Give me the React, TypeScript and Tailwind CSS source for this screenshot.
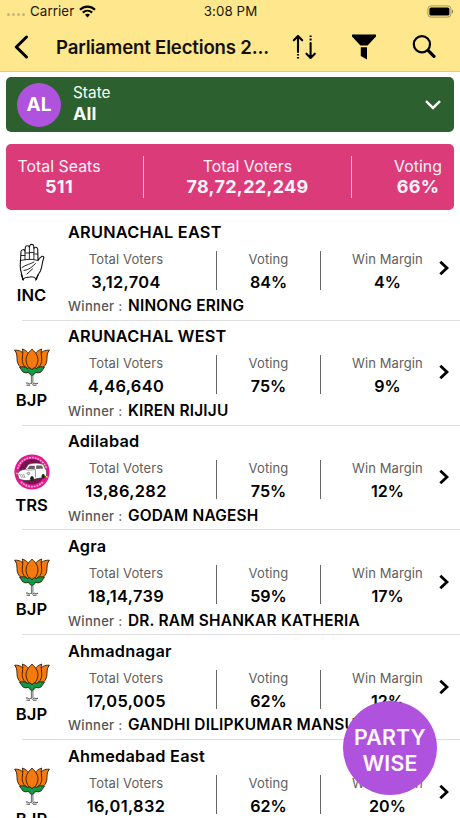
import type { ReactNode } from 'react';

/* ------------------------------------------------------------------ */
/*  Data                                                               */
/* ------------------------------------------------------------------ */

type Party = 'INC' | 'BJP' | 'TRS';

interface Constituency {
  name: string;
  party: Party;
  voters: string;
  voting: string;
  margin: string;
  winner: string;
}

const CONSTITUENCIES: Constituency[] = [
  { name: 'ARUNACHAL EAST', party: 'INC', voters: '3,12,704', voting: '84%', margin: '4%', winner: 'NINONG ERING' },
  { name: 'ARUNACHAL WEST', party: 'BJP', voters: '4,46,640', voting: '75%', margin: '9%', winner: 'KIREN RIJIJU' },
  { name: 'Adilabad', party: 'TRS', voters: '13,86,282', voting: '75%', margin: '12%', winner: 'GODAM NAGESH' },
  { name: 'Agra', party: 'BJP', voters: '18,14,739', voting: '59%', margin: '17%', winner: 'DR. RAM SHANKAR KATHERIA' },
  { name: 'Ahmadnagar', party: 'BJP', voters: '17,05,005', voting: '62%', margin: '12%', winner: 'GANDHI DILIPKUMAR MANSU' },
  { name: 'Ahmedabad East', party: 'BJP', voters: '16,01,832', voting: '62%', margin: '20%', winner: '' },
];

/* ------------------------------------------------------------------ */
/*  Party symbols                                                      */
/* ------------------------------------------------------------------ */

function HandSymbol() {
  return (
    <svg viewBox="0 0 36 40" className="h-10 w-9" fill="#fff" stroke="#111" strokeWidth="1.1" strokeLinejoin="round" strokeLinecap="round">
      <path d="M8.5 37.5 C9 34 6.2 30 6.2 24 L7 9.5 C7.3 7.2 10.5 7 11 9.3 L11.3 5.5 C11.7 3.3 15 3.3 15.4 5.3 L15.7 3.8 C16.2 1.8 19.3 1.9 19.7 4 L20 6.4 C20.6 4.6 23.5 5 23.7 7 L24 18.5 C25 17 26 15 27.8 14.4 C29.5 14 30.3 15.3 29.4 17 C28 20.5 28.2 25 26.4 29 C24.8 32 23 34 22.4 37.5 C20.5 34.5 18.5 34.4 16 35 C13 35.6 11.5 34.5 8.5 37.5 Z" />
      <path d="M11 9 V18 M15.4 5 V17.5 M19.9 6 V17.5 M6.6 18.5 C12 17 19 16.8 24 18.5 M7 13.5 H11 M11.3 11 H15.4 M15.7 10.5 H19.8 M20 12 H23.8 M8 25.5 C12 22.5 17 22 20 20 M10 28.5 C15 28 18 25 21.5 21.5 M13 32 L18.5 27" fill="none" strokeWidth="0.9" />
      <path d="M7.3 32.5 L9.3 38 M24 33 L21.8 38" fill="none" strokeWidth="1.3" />
    </svg>
  );
}

function LotusSymbol() {
  return (
    <svg viewBox="0 0 36 40" className="h-10 w-9" stroke="#2b1a08" strokeWidth="0.9" strokeLinejoin="round">
      <g fill="#f57a0c">
        <path d="M0.6 3.2 C5 3 9 4.5 11 9 L16 23 C8 23 3 19 3 11.5 C3 8 2.6 5.5 0.6 3.2 Z" />
        <path d="M35.4 3.2 C31 3 27 4.5 25 9 L20 23 C28 23 33 19 33 11.5 C33 8 33.4 5.5 35.4 3.2 Z" />
        <path d="M8.3 2 C12.5 3.5 16 6.5 16.5 12 L17.5 23 C10.5 21.5 7.4 16.5 8.4 10 C8.9 7 9 4.5 8.3 2 Z" />
        <path d="M27.7 2 C23.5 3.5 20 6.5 19.5 12 L18.5 23 C25.5 21.5 28.6 16.5 27.6 10 C27.1 7 27 4.5 27.7 2 Z" />
        <path d="M18 2.2 C22.5 6 24.3 10 23.9 14 C23.5 18 21 21.5 18 23.5 C15 21.5 12.5 18 12.1 14 C11.7 10 13.5 6 18 2.2 Z" />
      </g>
      <path d="M5.5 20.5 C8.5 19.2 11 19.5 13.5 21.5 C15 20 16.5 21 18 22.5 C19.5 21 21 20 22.5 21.5 C25 19.5 27.5 19.2 30.5 20.5 C28.5 22 28 25.5 25 25.8 C23.5 26 22.5 25.5 21.5 25.2 C20.5 27.7 19 28.2 18 28.5 C17 28.2 15.5 27.7 14.5 25.2 C13.5 25.5 12.5 26 11 25.8 C8 25.5 7.5 22 5.5 20.5 Z" fill="#109a48" />
      <path d="M17.4 28.5 V36 M18.9 28.5 V36" fill="none" strokeWidth="0.8" stroke="#444" />
      <path d="M12 36 C13.5 35 15 38 16.5 36.5 C17.5 35.5 18.5 38.5 19.5 36.5 C21 35.3 22.5 38 24 36 M12.5 38.2 H16 M19 38.2 H22.5" fill="none" strokeWidth="1" stroke="#444" />
    </svg>
  );
}

function CarSymbol() {
  return (
    <svg viewBox="0 0 36 40" className="h-10 w-9">
      <circle cx="18" cy="20" r="17.6" fill="#e6178f" />
      <path d="M3.6 17 A14.8 14.8 0 0 1 32.4 17" fill="none" stroke="#f9a5d3" strokeWidth="1.8" strokeDasharray="1.9 0.9" />
      <path d="M7 29.8 A14.8 14.8 0 0 0 29 29.8" fill="none" stroke="#f9a5d3" strokeWidth="1.8" strokeDasharray="1.9 0.9" />
      <circle cx="18" cy="19.8" r="12.8" fill="#7a1450" />
      <path d="M3.6 21.5 C4.5 19 7.5 17.6 11 17.2 L14.5 12.3 C18 10.6 26 10.6 29.5 12.5 L31.5 17 C33 18.5 33 21 32.4 24 L29 25.6 L18.5 27.6 C13 29.3 7 28.5 4.5 26.3 Z" fill="#fff" stroke="#333" strokeWidth="0.7" />
      <path d="M13.4 17 L15.6 13.7 H20.8 V17 Z M22.2 13.6 H27.8 L29.4 16.6 L22.2 17 Z" fill="#6a5a63" />
      <path d="M11 17.2 C14 18.5 18 18 21.5 17.6 V25.4 M5.5 22 L7.5 25.5 M7.5 22 L9.5 26 M9.5 22 L11 26" fill="none" stroke="#777" strokeWidth="0.7" />
      <ellipse cx="18" cy="26.6" rx="1.9" ry="2.5" fill="#222" />
      <ellipse cx="29.2" cy="24.2" rx="1.6" ry="2.2" fill="#222" />
      <circle cx="14.5" cy="21.4" r="1.3" fill="#ddd" stroke="#444" strokeWidth="0.5" />
      <circle cx="3" cy="21.5" r="0.9" fill="#ffc928" />
      <circle cx="32.8" cy="24.8" r="1" fill="#ffc928" />
    </svg>
  );
}

const SYMBOLS: Record<Party, ReactNode> = {
  INC: <HandSymbol />,
  BJP: <LotusSymbol />,
  TRS: <CarSymbol />,
};

/* ------------------------------------------------------------------ */
/*  Header                                                             */
/* ------------------------------------------------------------------ */

function StatusBar() {
  return (
    <div className="flex h-[22px] items-center text-[13.3px] leading-4 text-[#1b1808]">
      <div className="flex flex-1 items-center pl-[7px]">
        <div className="flex gap-[2px] pt-[7px]">
          <span className="size-[3px] rounded-full bg-[#c9b877]" />
          <span className="size-[3px] rounded-full bg-[#c9b877]" />
          <span className="size-[3px] rounded-full bg-[#c9b877]" />
          <span className="size-[3px] rounded-full bg-[#c9b877]" />
        </div>
        <span className="ml-[5px] tracking-[0.1px]">Carrier</span>
        <svg viewBox="0 0 17 13" className="ml-[5px] h-[13px] w-[17px]" fill="none" stroke="#000" strokeWidth="2.2">
          <path d="M1 4.7 C5.3 0.6 11.7 0.6 16 4.7" />
          <path d="M3.8 7.6 C6.5 5.1 10.5 5.1 13.2 7.6" />
          <path d="M8.5 12.4 L6 9.8 C7.4 8.5 9.6 8.5 11 9.8 Z" fill="#000" stroke="none" />
        </svg>
      </div>
      <span className="tracking-[0.1px]">3:08 PM</span>
      <div className="flex flex-1 justify-end pr-[6px]">
        <svg viewBox="0 0 27 13" className="h-[13px] w-[27px]">
          <rect x="0.9" y="0.9" width="23" height="11.2" rx="3" fill="none" stroke="#a3955e" />
          <rect x="2.4" y="2.4" width="20" height="8.2" rx="1.6" fill="#000" />
          <path d="M25 4.5 C26.6 5 26.6 8 25 8.5 Z" fill="#8f8353" />
        </svg>
      </div>
    </div>
  );
}

function NavBar() {
  return (
    <div className="mt-px flex h-12 items-center pl-[14px]">
      <button aria-label="Back">
        <svg viewBox="0 0 15 24" className="h-6 w-[15px]" fill="none" stroke="#000" strokeWidth="3" strokeLinecap="round" strokeLinejoin="round">
          <path d="M12.5 2 L2.3 12 L12.5 22" />
        </svg>
      </button>
      <h1 className="ml-[27px] w-[215px] whitespace-nowrap text-[18.6px] font-semibold leading-6 tracking-[-0.17px] text-[#14110a]">
        Parliament Elections 2...
      </h1>
      <button aria-label="Sort" className="ml-[21px]">
        <svg viewBox="0 0 26 26" className="size-[26px]" fill="none" stroke="#000" strokeWidth="2.1">
          <path d="M6 2 V18 M1.8 6.3 L6 2 L10.2 6.3 M18.6 24 V9 M14.4 19.7 L18.6 24 L22.8 19.7" strokeLinecap="round" strokeLinejoin="round" />
          <path d="M6 20 V21.6 M6 23 V24.6 M18.6 1.5 V3.1 M18.6 4.5 V6.5" />
        </svg>
      </button>
      <button aria-label="Filter" className="ml-[34px]">
        <svg viewBox="0 0 24 26" className="h-[26px] w-6" fill="#000">
          <path d="M0 0.6 H24 V2.4 L15.6 11.6 H8.4 L0 2.4 Z M8.8 13.2 H15 V25.4 L8.8 22 Z" />
        </svg>
      </button>
      <button aria-label="Search" className="ml-9">
        <svg viewBox="0 0 24 24" className="size-6" fill="none" stroke="#000">
          <circle cx="9.9" cy="9.2" r="8.1" strokeWidth="2.2" />
          <path d="M16.1 15.4 L22 21.3" strokeWidth="3.2" strokeLinecap="round" />
        </svg>
      </button>
    </div>
  );
}

/* ------------------------------------------------------------------ */
/*  Summary cards                                                      */
/* ------------------------------------------------------------------ */

function StateSelector() {
  return (
    <section className="mx-[6px] mt-[5px] flex h-[55px] items-center rounded-[5px] bg-[#2c602e] pl-[11px] pr-[13px] text-[#fbfff5]">
      <div className="flex size-11 items-center justify-center rounded-full bg-[#af52de] pt-px text-[19px] font-bold">
        AL
      </div>
      <div className="-mt-0.5 ml-3 flex-1">
        <p className="text-[15.3px] leading-[20px] tracking-[0.05px]">State</p>
        <p className="text-[18px] font-bold leading-[21px] tracking-[0.1px]">All</p>
      </div>
      <svg viewBox="0 0 16 10" className="h-[10px] w-4" fill="none" stroke="#fff" strokeWidth="2.5">
        <path d="M1 1.2 L8 8 L15 1.2" />
      </svg>
    </section>
  );
}

function Total({ label, value, className }: { label: string; value: string; className: string }) {
  return (
    <div className={`text-center ${className}`}>
      <p className="-mt-px text-[15.8px] leading-5 tracking-[0.05px]">{label}</p>
      <p className="text-[18px] font-bold leading-5 tracking-[0.3px]">{value}</p>
    </div>
  );
}

function Totals() {
  return (
    <section className="mx-[6px] mt-3 flex h-[66px] items-center rounded-[5px] bg-[#db3b78] text-[#fff3f8]">
      <Total label="Total Seats" value="511" className="ml-[5px] w-24" />
      <span className="ml-9 h-[42px] w-px bg-[#f5bfd4]" />
      <Total label="Total Voters" value="78,72,22,249" className="w-[207px]" />
      <span className="h-[42px] w-px bg-[#f5bfd4]" />
      <Total label="Voting" value="66%" className="ml-[33px] w-[66px]" />
    </section>
  );
}

/* ------------------------------------------------------------------ */
/*  List                                                               */
/* ------------------------------------------------------------------ */

interface StatProps {
  label: string;
  value: string;
  className: string;
  valueClassName?: string;
}

function Stat({ label, value, className, valueClassName = 'text-[16.1px]' }: StatProps) {
  return (
    <div className={`flex flex-col items-center whitespace-nowrap ${className}`}>
      <p className="text-[13px] leading-[22px] tracking-[0.1px] text-[#606060]">{label}</p>
      <p className={`-mb-px pt-px font-semibold leading-[23px] ${valueClassName}`}>{value}</p>
    </div>
  );
}

function ConstituencyRow({ item }: { item: Constituency }) {
  return (
    <li className="flex h-[104.8px] shrink-0 text-black">
      <div className="flex w-[63px] shrink-0 flex-col items-center pt-[26.4px]">
        {SYMBOLS[item.party]}
        <span className="pt-[0.6px] text-[16.6px] font-semibold leading-6">{item.party}</span>
      </div>
      <div className="ml-[5px] flex flex-1 flex-col pt-[3.6px]">
        <h2 className="text-[16.3px] font-semibold leading-6 tracking-[0.25px]">{item.name}</h2>
        <div className="mt-1 flex items-center">
          <Stat
            label="Total Voters"
            value={item.voters}
            className="w-[116px]"
            valueClassName="text-[16.4px] tracking-[0.35px]"
          />
          <span className="ml-8 h-[39px] w-px bg-[#666]" />
          <Stat label="Voting" value={item.voting} className="w-[103px]" />
          <span className="h-[39px] w-px bg-[#666]" />
          <Stat label="Win Margin" value={item.margin} className="ml-5 w-[93px]" />
          <svg viewBox="0 0 10 16" className="mb-[5px] ml-[5px] h-4 w-[10px]" fill="none" stroke="#000" strokeWidth="2.8">
            <path d="M1.3 1.7 L8 8 L1.3 14.3" />
          </svg>
        </div>
        <p className="mt-[1.6px] flex whitespace-nowrap leading-6">
          <span className="w-[60px] text-[13px] font-medium tracking-[0.3px] text-[#555]">Winner :</span>
          <span className="text-[15.4px] font-semibold tracking-[0.23px]">{item.winner}</span>
        </p>
        <span className="mt-auto -ml-[46px] h-px bg-[#dedede]" />
      </div>
    </li>
  );
}

export default function App() {
  return (
    <main className="relative flex h-[818px] w-[460px] flex-col overflow-hidden bg-white font-['Inter',sans-serif]">
      <header className="h-[72px] shrink-0 border-b border-[#dccb91] bg-[#fee78d]">
        <StatusBar />
        <NavBar />
      </header>
      <div className="shrink-0">
        <StateSelector />
        <Totals />
      </div>
      <ul className="mt-[6px] flex flex-col">
        {CONSTITUENCIES.map((item) => (
          <ConstituencyRow key={item.name} item={item} />
        ))}
      </ul>
      <button className="absolute left-[343px] top-[701px] size-[94px] rounded-full bg-[#af52de] pt-1 text-[21.3px] font-semibold leading-[26px] tracking-[0.2px] text-[#fff8ff]">
        PARTY
        <br />
        WISE
      </button>
    </main>
  );
}
